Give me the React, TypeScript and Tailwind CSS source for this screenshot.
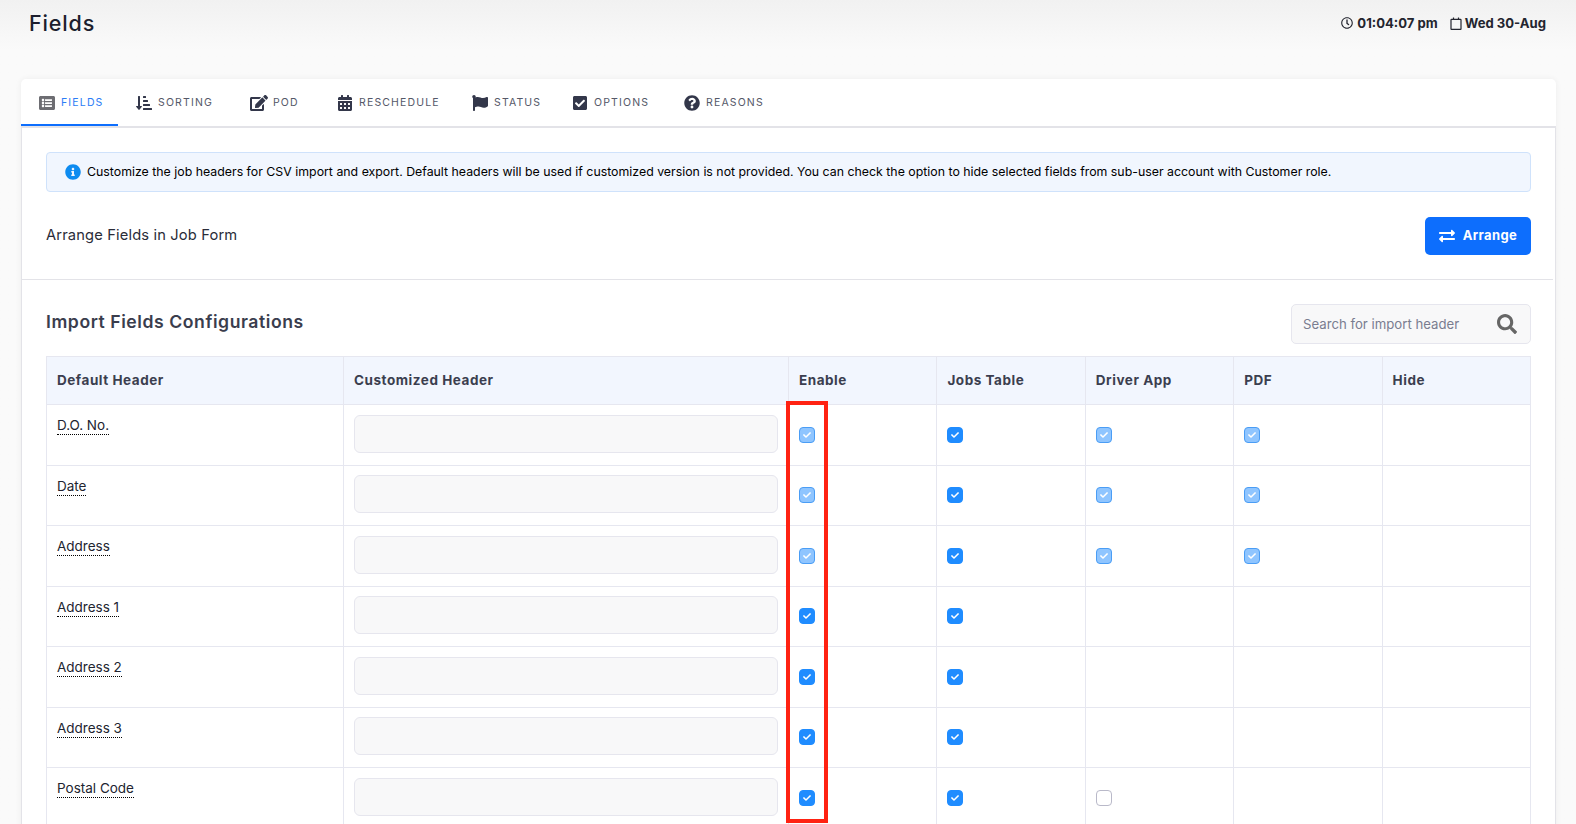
import React from "react";
import { FaListAlt, FaSortAmountDownAlt, FaEdit, FaCalendarAlt, FaFlag, FaCheckSquare, FaQuestionCircle, FaInfoCircle, FaExchangeAlt, FaSearch, FaRegClock, FaCheck } from "react-icons/fa";

const tabs = [
  { label: "Fields", icon: FaListAlt, width: "w-[97px]", iconSize: "w-4 h-4", gap: "gap-[6px]", active: true },
  { label: "Sorting", icon: FaSortAmountDownAlt, width: "w-[114px]", iconSize: "w-4 h-4", gap: "gap-[6px]" },
  { label: "POD", icon: FaEdit, width: "w-[87px]", iconSize: "w-[18px] h-[18px]", gap: "gap-[5px]" },
  { label: "Reschedule", icon: FaCalendarAlt, width: "w-[135px]", iconSize: "w-4 h-4", gap: "gap-[6px]" },
  { label: "Status", icon: FaFlag, width: "w-[100px]", iconSize: "w-4 h-4", gap: "gap-[6px]" },
  { label: "Options", icon: FaCheckSquare, width: "w-[112px]", iconSize: "w-4 h-4", gap: "gap-[6px]" },
  { label: "Reasons", icon: FaQuestionCircle, width: "w-[113px]", iconSize: "w-4 h-4", gap: "gap-[6px]" },
];

type Box = "on" | "locked" | "off" | null;

const rows: { name: string; enable: Box; jobs: Box; driver: Box; pdf: Box }[] = [
  { name: "D.O. No.", enable: "locked", jobs: "on", driver: "locked", pdf: "locked" },
  { name: "Date", enable: "locked", jobs: "on", driver: "locked", pdf: "locked" },
  { name: "Address", enable: "locked", jobs: "on", driver: "locked", pdf: "locked" },
  { name: "Address 1", enable: "on", jobs: "on", driver: null, pdf: null },
  { name: "Address 2", enable: "on", jobs: "on", driver: null, pdf: null },
  { name: "Address 3", enable: "on", jobs: "on", driver: null, pdf: null },
  { name: "Postal Code", enable: "on", jobs: "on", driver: "off", pdf: null },
];

const headers = ["Default Header", "Customized Header", "Enable", "Jobs Table", "Driver App", "PDF", "Hide"];

function Check({ state }: { state: Box }) {
  if (!state) return null;
  if (state === "off") return <span className="block w-4 h-4 rounded-[4px] border border-[#b9b9c9] bg-white" />;
  return (
    <span className={`flex items-center justify-center w-4 h-4 rounded-[4px] border ${state === "on" ? "bg-[#1f8cff] border-[#1f8cff]" : "bg-[#8fc5ff] border-[#4a9df5]"}`}>
      <FaCheck className="text-white w-2 h-2" />
    </span>
  );
}

export default function App() {
  return (
    <div className="h-screen overflow-hidden bg-gradient-to-b from-[#f1f1f1] to-[#fafafa] to-[50px] font-['Inter',sans-serif]">
      {/* Page header */}
      <div className="h-[79px] flex justify-between pl-[29px] pr-[30px]">
        <h1 className="text-[21.5px] leading-[47px] font-medium tracking-[0.04em] text-[#1c1e2e]">Fields</h1>
        <div className="flex items-center gap-3 h-[47px] text-[13.1px] font-bold text-[#23252f]">
          <span className="flex items-center gap-1"><FaRegClock className="w-3 h-3" />01:04:07 pm</span>
          <span className="flex items-center gap-[3px]">
            <svg viewBox="0 0 12 13" className="w-3 h-[13px]" fill="none" stroke="currentColor" strokeWidth="1.2">
              <rect x="1" y="2.4" width="10" height="10" rx="0.5" />
              <path d="M3.5 0.5v2M8.5 0.5v2" />
            </svg>
            Wed 30-Aug
          </span>
        </div>
      </div>

      {/* Card */}
      <div className="ml-[21px] w-[1535px] bg-white rounded-t-[5px] shadow-[0_0_6px_rgba(0,0,0,0.06)]">
        {/* Tabs */}
        <div className="flex h-[49px] border-b-2 border-[#e3e3e8]">
          {tabs.map((t) => (
            <div key={t.label} className={`${t.width} ${t.gap} h-[47px] pl-[18px] pt-[2px] flex items-center border-b-2 text-[10.5px] uppercase tracking-[0.11em] ${t.active ? "border-[#0d6efd] text-[#2b7cf6]" : "border-transparent text-[#555868]"}`}>
              <t.icon className={`${t.iconSize} shrink-0 ${t.active ? "text-[#6d6d72]" : "text-[#33374a]"}`} />
              {t.label}
            </div>
          ))}
        </div>

        <div className="border-x border-[#e3e3e8]">
          <div className="px-6 pt-6">
            <div className="flex items-center h-10 pl-[18px] gap-[6px] bg-[#f1f6fe] border border-[#cfe2fb] rounded text-[12.35px] text-black">
              <FaInfoCircle className="w-4 h-4 text-[#0d8bf0] shrink-0" />
              Customize the job headers for CSV import and export. Default headers will be used if customized version is not provided. You can check the option to hide selected fields from sub-user account with Customer role.
            </div>

            <div className="flex items-center justify-between mt-[25px]">
              <span className="text-[14.7px] leading-[20px] mb-[2px] tracking-[0.01em] text-[#2a2c38]">Arrange Fields in Job Form</span>
              <button className="flex items-center justify-center gap-2 w-[106px] h-[38px] bg-[#0d6efd] rounded-[5px] text-white text-[13px] font-bold tracking-[0.03em]">
                <FaExchangeAlt className="w-4 h-4" />
                Arrange
              </button>
            </div>
          </div>

          <div className="h-px bg-[#e3e3e8] mt-6 mr-[2px]" />

          <div className="px-6">
            <div className="flex items-center justify-between mt-6 h-10">
              <h2 className="text-[17.6px] leading-[24px] mb-1 font-semibold tracking-[0.032em] text-[#3a3d4d]">Import Fields Configurations</h2>
              <div className="flex items-center justify-between w-[240px] h-10 pl-[11px] pr-[13px] bg-[#f8f8f9] border border-[#e6e6ee] rounded-[5px]">
                <span className="text-[13.2px] pt-[2px] text-[#7a7d90]">Search for import header</span>
                <FaSearch className="w-5 h-5 text-[#666666]" />
              </div>
            </div>

            <div className="relative mt-3">
              <table className="table-fixed w-[1484px] border-collapse">
                <thead>
                  <tr className="h-[48px] bg-[#f2f6fe]">
                    {headers.map((h, i) => (
                      <th key={h} className={`${i === 0 ? "w-[297px]" : i === 1 ? "w-[445px]" : "w-[148.4px]"} border border-[#e6e7f0] px-[10px] text-left text-[13.5px] font-bold tracking-[0.04em] text-[#3b3e4f]`}>{h}</th>
                    ))}
                  </tr>
                </thead>
                <tbody>
                  {rows.map((r) => (
                    <tr key={r.name} className="h-[60.5px]">
                      <td className="border border-[#e6e7f0] px-[10px] pt-[7px] align-top">
                        <span className="border-b border-dotted border-black text-[13.5px] leading-[18px] inline-block text-[#222430]">{r.name}</span>
                      </td>
                      <td className="border border-[#e6e7f0] px-[10px] pb-[2px]">
                        <div className="h-[38px] bg-[#f8f8f9] border border-[#e6e6ee] rounded-[6px]" />
                      </td>
                      <td className="border border-[#e6e7f0] px-[10px]"><Check state={r.enable} /></td>
                      <td className="border border-[#e6e7f0] px-[10px]"><Check state={r.jobs} /></td>
                      <td className="border border-[#e6e7f0] px-[10px]"><Check state={r.driver} /></td>
                      <td className="border border-[#e6e7f0] px-[10px]"><Check state={r.pdf} /></td>
                      <td className="border border-[#e6e7f0]" />
                    </tr>
                  ))}
                </tbody>
              </table>
              {/* Red highlight around the Enable column */}
              <div className="absolute left-[740px] top-[45px] w-[42px] h-[422px] border-4 border-[#ff2212]" />
            </div>
          </div>
        </div>
      </div>
    </div>
  );
}
